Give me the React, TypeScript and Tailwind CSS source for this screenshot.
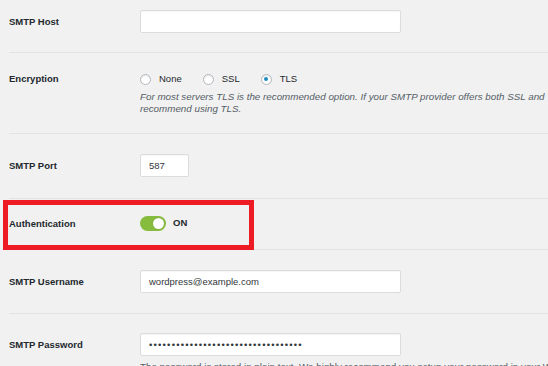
import type { ReactNode } from 'react'

const font = { fontFamily: '"Liberation Sans", Arial, sans-serif' }

const inputClass =
  'h-[23px] rounded-[2px] border border-[#dcdcdc] bg-white px-[8px] text-[9.5px] leading-[21px] text-[#32373c] shadow-[inset_0_1px_1px_rgba(0,0,0,0.04)]'

function Row({ label, labelHeight, className, children }: { label: string; labelHeight: string; className: string; children: ReactNode }) {
  return (
    <div className={`flex border-b border-[#e3e3e3] ${className}`}>
      <div className={`w-[131px] shrink-0 text-[9.5px] font-bold text-[#23282d] ${labelHeight}`}>{label}</div>
      <div className="flex flex-col">{children}</div>
    </div>
  )
}

function Radio({ label, checked }: { label: string; checked?: boolean }) {
  return (
    <label className="flex items-center">
      <span className="flex h-[11px] w-[11px] items-center justify-center rounded-full border border-[#b4b9be] bg-white shadow-[inset_0_1px_2px_rgba(0,0,0,0.1)]">
        {checked ? <span className="h-[4px] w-[4px] rounded-full bg-[#1e8cbe]" /> : null}
      </span>
      <span className="ml-[8px] text-[9.5px] text-[#23282d]">{label}</span>
    </label>
  )
}

export default function App() {
  return (
    <div className="relative h-[366px] w-[548px] overflow-hidden bg-[#f1f1f1]" style={font}>
      <div className="-mt-[10px] ml-[9px] w-[700px]">
        <Row label="SMTP Host" labelHeight="leading-[23px]" className="pt-5 pb-[19px]">
          <div className={`${inputClass} w-[261px]`} />
        </Row>

        <Row label="Encryption" labelHeight="leading-[12px]" className="pt-5 pb-[18px]">
          <div className="flex h-[12px] items-center gap-[21px]">
            <Radio label="None" />
            <Radio label="SSL" />
            <Radio label="TLS" checked />
          </div>
          <p className="mt-[6px] w-[515px] text-[9.8px] leading-[12px] text-[#555d66] italic">
            For most servers TLS is the recommended option. If your SMTP provider offers both SSL and TLS options, we recommend using TLS.
          </p>
        </Row>

        <Row label="SMTP Port" labelHeight="leading-[23px]" className="pt-5 pb-[21px]">
          <div className={`${inputClass} w-[49px]`}>587</div>
        </Row>

        <Row label="Authentication" labelHeight="leading-[15px]" className="pt-[17px] pb-[18px]">
          <div className="flex h-[15px] items-center">
            <span className="flex h-[15px] w-[26px] items-center justify-end rounded-full bg-[#86bc3d] pr-[2px]">
              <span className="h-[11px] w-[11px] rounded-full bg-white shadow-[0_0_1px_rgba(0,0,0,0.3)]" />
            </span>
            <span className="ml-[7px] text-[9.5px] font-bold text-[#23282d]">ON</span>
          </div>
        </Row>

        <Row label="SMTP Username" labelHeight="leading-[23px]" className="pt-5 pb-5">
          <div className={`${inputClass} w-[261px]`}>wordpress@example.com</div>
        </Row>

        <Row label="SMTP Password" labelHeight="leading-[23px]" className="pt-[19px] pb-5">
          <div className={`${inputClass} w-[261px] tracking-[1.2px] text-[#111]`}>••••••••••••••••••••••••••••••••••</div>
          <p className="mt-[5px] w-[560px] text-[9.8px] leading-[12px] text-[#555d66]">
            The password is stored in plain text. We highly recommend you setup your password in your WordPress configuration file for improved security.
          </p>
        </Row>
      </div>

      <div className="pointer-events-none absolute left-[3px] top-[200px] h-[50px] w-[251px] border-[5px] border-[#ed1c24]" />
    </div>
  )
}
